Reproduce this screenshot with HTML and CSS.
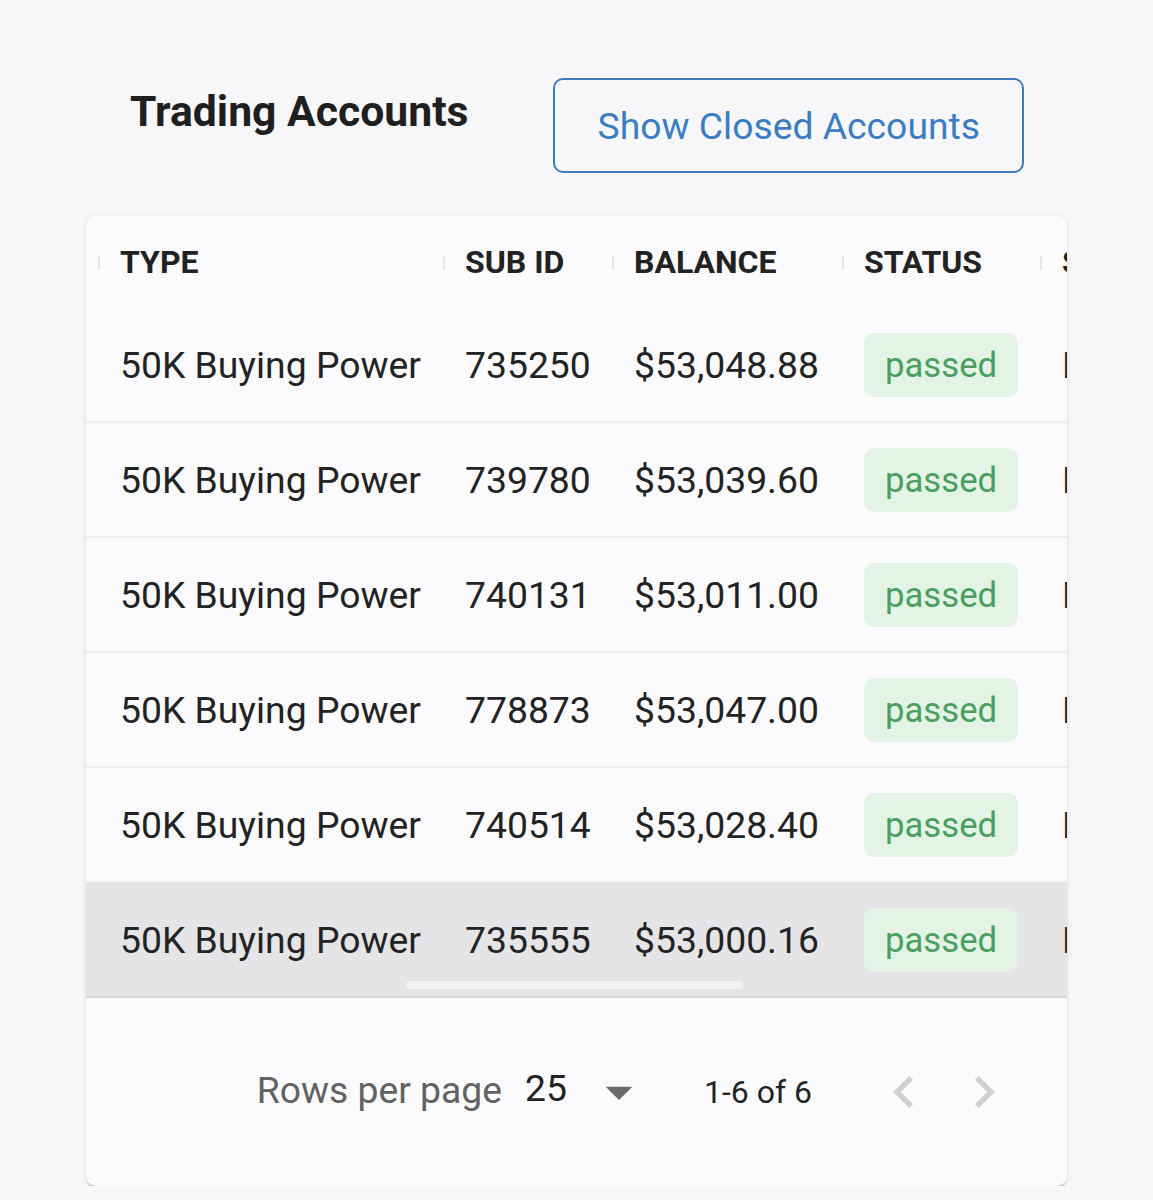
FILE: index.html
```html
<!DOCTYPE html>
<html>
<head>
    <title>Trading Accounts</title>
    <link rel="stylesheet" href="styles.css">
</head>
<body>
    <div class="page">
        <div class="top-bar">
            <h2 class="title">Trading Accounts</h2>
            <button class="outline-btn">Show Closed Accounts</button>
        </div>

        <div class="grid-card">
            <div class="grid-viewport">
                <div class="grid-row grid-head">
                    <div class="cell col-type">TYPE</div>
                    <div class="cell col-sub">SUB ID</div>
                    <div class="cell col-bal">BALANCE</div>
                    <div class="cell col-status">STATUS</div>
                    <div class="cell col-next">START DATE</div>
                </div>

                <div class="grid-row">
                    <div class="cell col-type">50K Buying Power</div>
                    <div class="cell col-sub">735250</div>
                    <div class="cell col-bal">$53,048.88</div>
                    <div class="cell col-status"><span class="pill">passed</span></div>
                    <div class="cell col-next">Buying Power</div>
                </div>
                <div class="grid-row">
                    <div class="cell col-type">50K Buying Power</div>
                    <div class="cell col-sub">739780</div>
                    <div class="cell col-bal">$53,039.60</div>
                    <div class="cell col-status"><span class="pill">passed</span></div>
                    <div class="cell col-next">Buying Power</div>
                </div>
                <div class="grid-row">
                    <div class="cell col-type">50K Buying Power</div>
                    <div class="cell col-sub">740131</div>
                    <div class="cell col-bal">$53,011.00</div>
                    <div class="cell col-status"><span class="pill">passed</span></div>
                    <div class="cell col-next">Buying Power</div>
                </div>
                <div class="grid-row">
                    <div class="cell col-type">50K Buying Power</div>
                    <div class="cell col-sub">778873</div>
                    <div class="cell col-bal">$53,047.00</div>
                    <div class="cell col-status"><span class="pill">passed</span></div>
                    <div class="cell col-next">Buying Power</div>
                </div>
                <div class="grid-row">
                    <div class="cell col-type">50K Buying Power</div>
                    <div class="cell col-sub">740514</div>
                    <div class="cell col-bal">$53,028.40</div>
                    <div class="cell col-status"><span class="pill">passed</span></div>
                    <div class="cell col-next">Buying Power</div>
                </div>
                <div class="grid-row is-hover">
                    <div class="cell col-type">50K Buying Power</div>
                    <div class="cell col-sub">735555</div>
                    <div class="cell col-bal">$53,000.16</div>
                    <div class="cell col-status"><span class="pill">passed</span></div>
                    <div class="cell col-next">Buying Power</div>
                </div>

                <div class="scroll-thumb"></div>
            </div>

            <div class="grid-footer">
                <span class="rows-label">Rows per page</span>
                <span class="rows-select">
                    <span class="rows-value">25</span>
                    <svg class="icon" viewBox="0 0 24 24"><path d="M7 10l5 5 5-5z" fill="#6b6b6b"/></svg>
                </span>
                <span class="rows-range">1-6 of 6</span>
                <span class="pager">
                    <svg class="icon" viewBox="0 0 24 24"><path d="M15.41 16.59 10.83 12l4.58-4.59L14 6l-6 6 6 6z" fill="#cfcfd1"/></svg>
                    <svg class="icon" viewBox="0 0 24 24"><path d="M8.59 16.59 13.17 12 8.59 7.41 10 6l6 6-6 6z" fill="#cfcfd1"/></svg>
                </span>
            </div>
        </div>
    </div>
</body>
</html>
```

FILE: styles.css
```css
body {
    margin: 0;
    background-color: #f7f7f9;
    font-family: Roboto, "Liberation Sans", Arial, sans-serif;
    color: #232323;
}
.page {
    width: 981px;
    margin-left: 86px;
    padding-top: 78px;
}
.top-bar {
    display: flex;
    justify-content: space-between;
    align-items: flex-start;
    padding: 0 43px 0 44px;
}
.title {
    margin: 0;
    font-size: 42.7px;
    line-height: 66px;
    font-weight: 700;
    color: #1f1f1f;
}
.outline-btn {
    height: 95px;
    padding: 0 42px 0 43px;
    background: transparent;
    border: 2px solid #3e7cbc;
    border-radius: 10px;
    color: #3b7dc1;
    font-family: inherit;
    font-size: 37.3px;
    cursor: pointer;
}
.grid-card {
    margin-top: 43px;
    background-color: #fbfbfd;
    border-radius: 10px;
    overflow: hidden;
    box-shadow: 0 5px 3px -3px rgba(0, 0, 0, 0.22), 0 2px 3px rgba(0, 0, 0, 0.1), 0 0 6px rgba(0, 0, 0, 0.05);
}
.grid-viewport {
    position: relative;
    overflow: hidden;
}
.grid-row {
    display: flex;
    align-items: center;
    height: 115px;
    padding-left: 12px;
    box-sizing: border-box;
    border-bottom: 2px solid #ededf0;
    white-space: nowrap;
    font-size: 37.3px;
}
.grid-head {
    height: 92px;
    border-bottom: none;
    font-size: 32px;
    font-weight: 700;
    color: #222;
}
.grid-row.is-hover {
    background-color: #e5e5e8;
    border-bottom-color: #d8d8db;
}
.cell {
    flex: none;
    position: relative;
    padding-left: 22px;
    box-sizing: border-box;
}
.grid-head .cell::before {
    content: "";
    position: absolute;
    left: 0;
    top: 50%;
    width: 2px;
    height: 14px;
    margin-top: -6px;
    background-color: #e6e6ea;
}
.col-type { width: 345px; }
.col-sub { width: 169px; }
.col-bal { width: 230px; }
.col-status { width: 198px; }
.col-next { width: 200px; }
.pill {
    display: inline-block;
    height: 64px;
    line-height: 64px;
    padding: 0 21px;
    border-radius: 10px;
    background-color: #e3f4e7;
    color: #4a9e5f;
    font-size: 34.7px;
}
.scroll-thumb {
    position: absolute;
    left: 320px;
    bottom: 9px;
    width: 337px;
    height: 8px;
    border-radius: 4px;
    background-color: #f2f2f4;
}
.grid-footer {
    display: flex;
    justify-content: flex-end;
    align-items: center;
    height: 188px;
    padding-right: 51px;
}
.icon {
    width: 64px;
    height: 64px;
    display: block;
}
.rows-label {
    font-size: 37.3px;
    color: #626262;
    margin-right: 23px;
    position: relative;
    top: -2px;
}
.rows-select {
    display: flex;
    align-items: center;
    margin-right: 53px;
}
.rows-value {
    font-size: 37.3px;
    color: #222;
    margin-right: 20px;
    position: relative;
    top: -4px;
}
.rows-range {
    font-size: 32px;
    color: #222;
    margin-right: 60px;
}
.pager {
    display: flex;
    gap: 16px;
}
```
